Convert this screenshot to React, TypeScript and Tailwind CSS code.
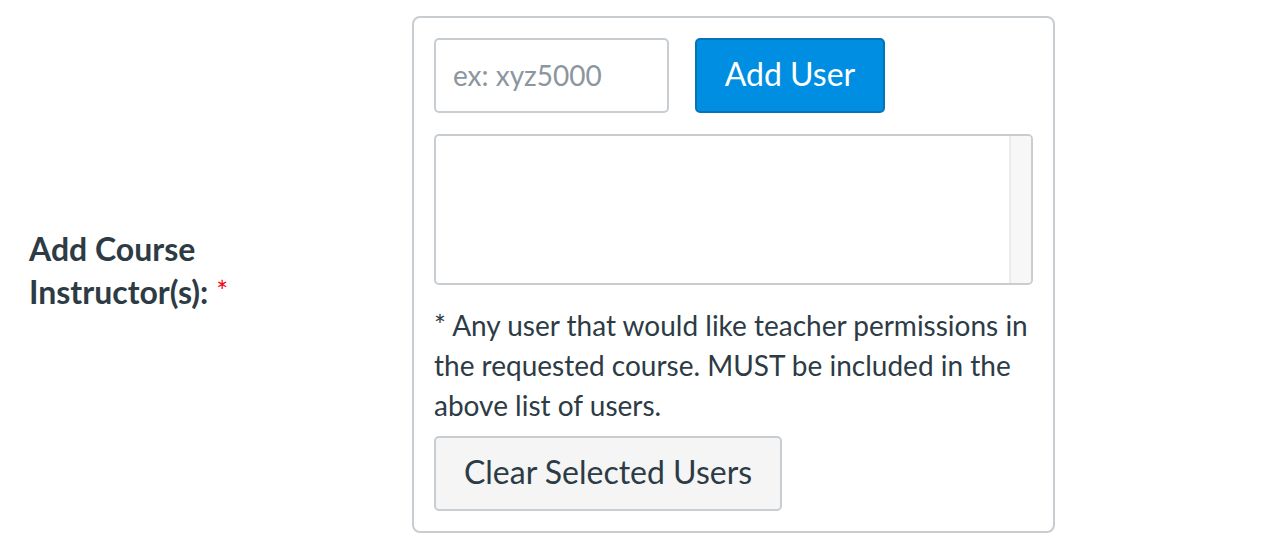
import React from 'react'

export default function App() {
  return (
    <div className="min-h-screen bg-white font-['Lato','Liberation_Sans',sans-serif] text-[#2d3b45]">
      <div className="flex items-center pt-4">
        <div className="w-[412px] shrink-0 pl-[29px] pb-[10px]">
          <div className="text-[32px] font-bold leading-[43px]">
            Add Course
            <br />
            Instructor(s): <span className="align-top text-[28px] font-normal text-[#ee0612]">*</span>
          </div>
        </div>

        <div className="w-[643px] rounded-[8px] border-2 border-[#c7cdd1] p-5">
          <div className="flex gap-[26px]">
            <input
              placeholder="ex: xyz5000"
              className="h-[75px] w-[235px] rounded-[5px] border-2 border-[#c7cdd1] px-[17px] pb-[2px] text-[28px] placeholder:text-[#8b969e] focus:outline-none"
            />
            <button className="h-[75px] w-[190px] rounded-[5px] border-2 border-[#0374b5] bg-[#008ee2] pb-[4px] text-[32px] text-white">
              Add User
            </button>
          </div>

          <div className="mt-[21px] flex h-[151px] w-full overflow-hidden rounded-[5px] border-2 border-[#c7cdd1]">
            <div className="flex-1" />
            <div className="w-[22px] border-l-2 border-[#ebebeb] bg-[#f7f7f7]" />
          </div>

          <p className="mt-[20px] text-[28px] leading-[40px]">
            * Any user that would like teacher permissions in the requested course. MUST be included in the
            above list of users.
          </p>

          <button className="mt-[11px] h-[75px] w-[348px] rounded-[5px] border-2 border-[#c7cdd1] bg-[#f5f5f5] pb-[4px] text-[32px] text-[#2d3b45]">
            Clear Selected Users
          </button>
        </div>
      </div>
    </div>
  )
}
